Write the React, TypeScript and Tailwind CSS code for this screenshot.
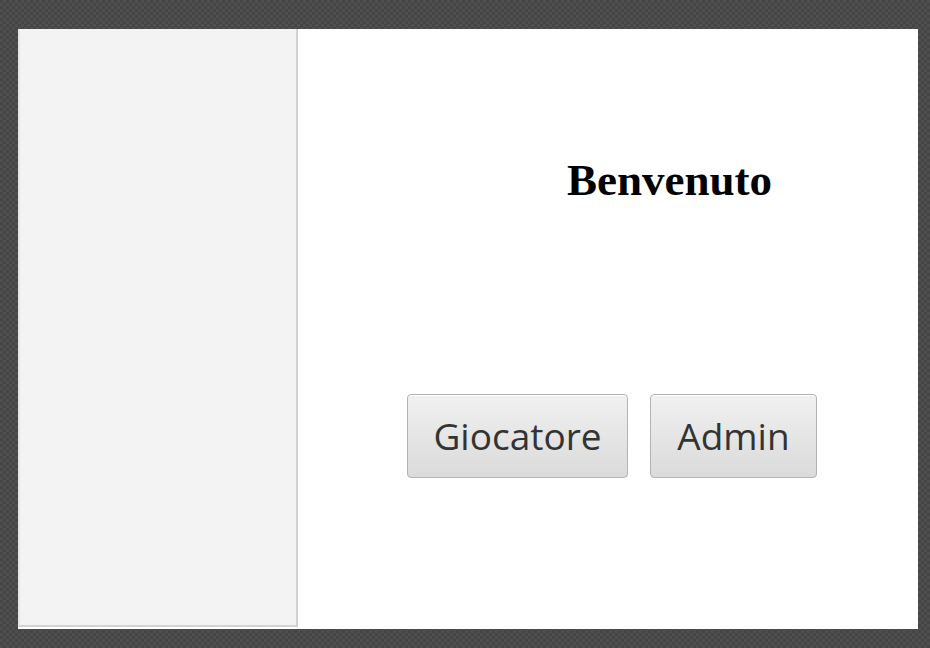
const serif = { fontFamily: '"Liberation Serif", "DejaVu Serif", serif' };

const Button = ({ label, className }: { label: string; className: string }) => (
  <button
    className={`flex h-[84px] items-center justify-center rounded-[4px] border border-[#b3b3b3] bg-gradient-to-b from-[#f1f1f1] to-[#dadada] font-['Open_Sans',sans-serif] text-[37px] text-[#333333] shadow-[inset_0_1px_0_#ffffff] ${className}`}
  >
    {label}
  </button>
);

export default function App() {
  return (
    <div className="h-screen w-screen bg-[#494949] bg-[repeating-conic-gradient(#4f4f4f_0%_25%,#454545_0%_50%)] bg-[length:6px_6px] pl-[18px] pt-[29px]">
      <div className="flex h-[600px] w-[900px] bg-white">
        {/* sidebar */}
        <aside className="h-[598px] w-[280px] border-b-2 border-l-2 border-r-2 border-b-[#d2d2d2] border-l-[#e6e6e6] border-r-[#d2d2d2] bg-[#f3f3f3]" />

        <main className="flex flex-1 flex-col">
          <h1
            style={serif}
            className="ml-[269px] mt-[129px] text-[45px] font-bold leading-none text-black"
          >
            Benvenuto
          </h1>

          <div className="ml-[109px] mt-[191px] flex gap-[22px]">
            <Button label="Giocatore" className="w-[221px]" />
            <Button label="Admin" className="w-[167px]" />
          </div>
        </main>
      </div>
    </div>
  );
}
